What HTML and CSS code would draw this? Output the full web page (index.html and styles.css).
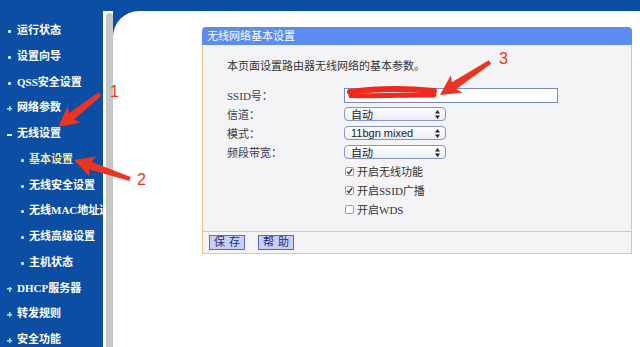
FILE: index.html
```html
<!DOCTYPE html>
<html lang="zh-CN">
<head>
  <meta charset="UTF-8" />
  <title>无线网络基本设置</title>
  <link rel="stylesheet" href="styles.css">
</head>
<body>
  <div class="frame">
    <nav class="menu">
      <ul>
        <li class="dot">运行状态</li>
        <li class="dot">设置向导</li>
        <li class="dot">QSS安全设置</li>
        <li class="plus">网络参数</li>
        <li class="minus">无线设置</li>
        <li class="sub active">基本设置</li>
        <li class="sub">无线安全设置</li>
        <li class="sub">无线MAC地址过滤</li>
        <li class="sub">无线高级设置</li>
        <li class="sub">主机状态</li>
        <li class="plus">DHCP服务器</li>
        <li class="plus">转发规则</li>
        <li class="plus">安全功能</li>
      </ul>
    </nav>
    <div class="split"><div class="grip"></div></div>
    <main class="main">
      <div class="panel">
        <div class="panel-head">无线网络基本设置</div>
        <div class="panel-body">
          <p class="intro">本页面设置路由器无线网络的基本参数。</p>
          <div class="form">
            <label>SSID号：</label>
            <div class="text-input"></div>
            <label>信道：</label>
            <div class="select"><span>自动</span><svg width="5" height="9" viewBox="0 0 5 9"><path d="M2.5 0 L5 3.5 H0 Z M2.5 9 L5 5.5 H0 Z" fill="#222"/></svg></div>
            <label>模式：</label>
            <div class="select"><span class="latin">11bgn mixed</span><svg width="5" height="9" viewBox="0 0 5 9"><path d="M2.5 0 L5 3.5 H0 Z M2.5 9 L5 5.5 H0 Z" fill="#222"/></svg></div>
            <label>频段带宽：</label>
            <div class="select"><span>自动</span><svg width="5" height="9" viewBox="0 0 5 9"><path d="M2.5 0 L5 3.5 H0 Z M2.5 9 L5 5.5 H0 Z" fill="#222"/></svg></div>
            <span></span>
            <div class="check"><span class="box"><svg width="7" height="7" viewBox="0 0 7 7"><path d="M1 3.6 L2.8 5.6 L6.2 1" fill="none" stroke="#333" stroke-width="1.3"/></svg></span>开启无线功能</div>
            <span></span>
            <div class="check"><span class="box"><svg width="7" height="7" viewBox="0 0 7 7"><path d="M1 3.6 L2.8 5.6 L6.2 1" fill="none" stroke="#333" stroke-width="1.3"/></svg></span>开启SSID广播</div>
            <span></span>
            <div class="check"><span class="box"></span>开启WDS</div>
          </div>
        </div>
        <div class="panel-foot">
          <button>保存</button>
          <button>帮助</button>
        </div>
      </div>
    </main>
  </div>

  <svg class="marks" width="640" height="347" viewBox="0 0 640 347">
    <g fill="#ec3422">
      <polygon transform="translate(100 94) rotate(141.8)" points="0,-2.2 36,-4 33,-10.5 53,0 33,10.5 36,4 0,2.2"/>
      <polygon transform="translate(130 179) rotate(-161.3)" points="0,-2.2 42,-4 39,-10.5 59,0 39,10.5 42,4 0,2.2"/>
      <polygon transform="translate(490 62) rotate(146.6)" points="0,-2.2 43,-4 40,-10.5 60,0 40,10.5 43,4 0,2.2"/>
    </g>
    <g fill="none" stroke="#ee2a1d" stroke-linecap="round">
      <path d="M350 92 C372 89 402 88 434 91" stroke-width="6"/>
      <path d="M351 95.5 C378 96.5 408 94.5 434 95" stroke-width="5"/>
    </g>
    <g class="num" fill="#ec3422">
      <text x="110" y="97">1</text>
      <text x="137" y="185">2</text>
      <text x="499" y="64">3</text>
    </g>
  </svg>
</body>
</html>
```

FILE: styles.css
```css
html, body { margin: 0; height: 100%; }
body { background: #0b4ea3; font-family: "Liberation Serif", "Noto Sans CJK SC", serif; font-size: 11px; overflow: hidden; position: relative; }
.frame { display: flex; height: 347px; }

.menu { width: 103px; flex: none; overflow: hidden; }
.menu ul { list-style: none; margin: 0; padding: 18px 0 0; }
.menu li { position: relative; height: 25.75px; line-height: 25.75px; padding-left: 17px; color: #fff; font-weight: bold; white-space: nowrap; }
.menu li.sub { padding-left: 29px; }
.menu li.active { color: #f2e7a2; }
.menu li::before { content: ""; position: absolute; top: 12px; }
.menu li.dot::before { left: 8px; width: 3px; height: 3px; background: #e4ecef; border-radius: 1px; }
.menu li.sub::before { left: 21px; width: 3px; height: 3px; background: #bfe8d8; border-radius: 1px; }
.menu li.plus::before { left: 7px; top: 11px; width: 5px; height: 5px; background: linear-gradient(#a6e3bf, #a6e3bf) center / 5px 1.5px no-repeat, linear-gradient(#a6e3bf, #a6e3bf) center / 1.5px 5px no-repeat; }
.menu li.minus::before { left: 7px; top: 13px; width: 5px; height: 1.5px; background: #e8f2ee; }

.split { width: 10px; flex: none; margin-top: 11px; padding-left: 3px; box-sizing: border-box; background: #fff; }
.grip { height: 100%; margin-top: 2px; background: #c6c6c6; border-radius: 4px 4px 0 0; }
.main { flex: 1; margin-top: 11px; background: #fff; border-top-left-radius: 26px; }

.panel { margin: 16px 0 0 89px; width: 430px; }
.panel-head { height: 18px; line-height: 18px; padding-left: 5px; background: #5b8cf2; color: #fff; border-radius: 4px 4px 0 0; }
.panel-body { background: #f4f4f6; border-left: 1px solid #f1c483; border-right: 1px solid #f1c483; padding: 14px 0 12px 24px; color: #333; }
.intro { margin: 0; line-height: 14px; }
.form { display: grid; grid-template-columns: 117px auto; grid-auto-rows: 19px; align-items: center; margin-top: 12.5px; }
.form label { color: #3b3b4f; }

.text-input { width: 214px; height: 15px; box-sizing: border-box; border: 1px solid #7c88c0; background: #fff; }
.select { width: 102px; height: 14px; box-sizing: border-box; border: 1px solid #8693c6; border-radius: 4px; background: linear-gradient(#fff, #eceef5); display: flex; align-items: center; justify-content: space-between; padding: 0 5px 0 6px; color: #222; }
.select .latin { font-family: "Liberation Sans", sans-serif; font-size: 11px; }

.check { display: flex; align-items: center; gap: 3px; margin-left: 1px; color: #333; }
.box { width: 9px; height: 9px; box-sizing: border-box; border: 1px solid #9b9b9b; border-radius: 2px; background: #fff; display: flex; align-items: center; justify-content: center; }
.box svg { display: block; }

.panel-foot { display: flex; gap: 13px; padding: 3px 6px; border: 1px solid #f1c483; background: #f4f4f6; }
.panel-foot button { width: 36px; height: 15px; padding: 0 0 0 4px; border: 1px solid #5b68c9; background: #c9cff3; color: #1b2a7a; font-family: "Liberation Serif", "Noto Sans CJK SC", serif; font-size: 11px; line-height: 13px; letter-spacing: 4px; white-space: nowrap; }

.marks { position: absolute; top: 0; left: 0; pointer-events: none; }
.marks .num { font-family: "Liberation Sans", sans-serif; font-size: 16px; }
```
